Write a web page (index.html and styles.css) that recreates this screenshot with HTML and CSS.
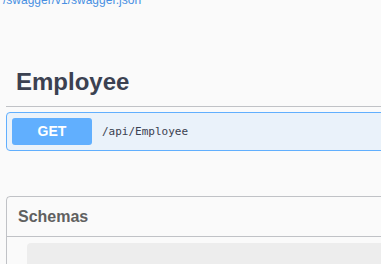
FILE: index.html
```html
<!DOCTYPE html>
<html>
<head>
<meta charset="utf-8">
<link rel="stylesheet" href="styles.css">
</head>
<body>
<div class="page">
  <a class="info-link" href="#">/swagger/v1/swagger.json</a>
  <section class="tag-section">
    <h3 class="tag">Employee</h3>
    <div class="opblock">
      <div class="summary">
        <span class="method">GET</span>
        <span class="path">/api/Employee</span>
      </div>
    </div>
  </section>
  <section class="models">
    <h4 class="models-title">Schemas</h4>
    <div class="model-container"></div>
  </section>
</div>
</body>
</html>
```
FILE: styles.css
```css
html, body {
  margin: 0;
  overflow: hidden;
  background: #fafafa;
}
body {
  font-family: "Liberation Sans", Arial, sans-serif;
}
.page {
  width: 700px;
  padding-left: 6px;
  margin-top: -7px;
}
.info-link {
  display: block;
  margin-left: -3px;
  font-size: 12px;
  line-height: 14px;
  color: #4990e2;
  text-decoration: none;
}
.tag-section {
  margin-top: 51px;
}
.tag {
  margin: 0;
  padding: 10px 20px 10px 10px;
  font-size: 24px;
  font-weight: bold;
  line-height: 28px;
  color: #3b4151;
  border-bottom: 1px solid rgba(59, 65, 81, 0.3);
}
.opblock {
  margin-top: 5px;
  border: 1px solid #61affe;
  border-radius: 4px;
  background: rgba(97, 175, 254, 0.1);
}
.summary {
  display: flex;
  align-items: center;
  padding: 5px;
}
.method {
  min-width: 80px;
  padding: 6px 0;
  text-align: center;
  background: #61affe;
  color: #fff;
  font-size: 14px;
  font-weight: bold;
  line-height: 15px;
  border-radius: 3px;
}
.path {
  padding: 0 10px;
  font-family: "DejaVu Sans Mono", monospace;
  font-size: 11px;
  color: #3b4151;
}
.models {
  margin-top: 45px;
  border: 1px solid rgba(59, 65, 81, 0.3);
  border-radius: 4px;
}
.models-title {
  margin: 0;
  padding: 10px 20px 10px 11px;
  font-size: 16px;
  font-weight: bold;
  line-height: 19px;
  color: #606060;
  border-bottom: 1px solid rgba(59, 65, 81, 0.3);
}
.model-container {
  margin: 6px 20px 15px;
  height: 40px;
  background: rgba(0, 0, 0, 0.05);
  border-radius: 4px;
}
```
